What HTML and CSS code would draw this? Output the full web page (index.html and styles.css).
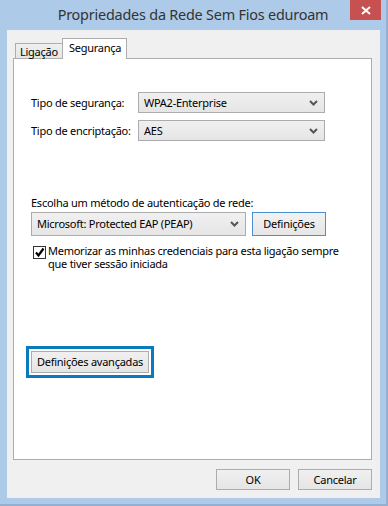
FILE: index.html
```html
<!DOCTYPE html>
<html lang="pt">
<head>
    <meta charset="UTF-8">
    <title>Propriedades da Rede Sem Fios eduroam</title>
    <link rel="stylesheet" href="styles.css">
</head>
<body>
    <div class="window">
        <div class="titlebar">
            <div class="title">Propriedades da Rede Sem Fios eduroam</div>
            <div class="close">
                <svg width="10" height="9" viewBox="0 0 10 9"><path d="M1 1 L9 8 M9 1 L1 8" stroke="#fff" stroke-width="2"/></svg>
            </div>
        </div>
        <div class="client">
            <div class="tabs">
                <div class="tab">Ligação</div>
                <div class="tab active">Segurança</div>
            </div>
            <div class="panel">
                <div class="row first">
                    <span class="label">Tipo de segurança:</span>
                    <div class="select wide">WPA2-Enterprise<span class="arrow"><svg width="9" height="6" viewBox="0 0 9 6"><path d="M1 1 L4.5 4.5 L8 1" stroke="#555" stroke-width="2" fill="none"/></svg></span></div>
                </div>
                <div class="row">
                    <span class="label">Tipo de encriptação:</span>
                    <div class="select wide">AES<span class="arrow"><svg width="9" height="6" viewBox="0 0 9 6"><path d="M1 1 L4.5 4.5 L8 1" stroke="#555" stroke-width="2" fill="none"/></svg></span></div>
                </div>

                <p class="method-label">Escolha um método de autenticação de rede:</p>
                <div class="method-row">
                    <div class="select method">Microsoft: Protected EAP (PEAP)<span class="arrow"><svg width="9" height="6" viewBox="0 0 9 6"><path d="M1 1 L4.5 4.5 L8 1" stroke="#555" stroke-width="2" fill="none"/></svg></span></div>
                    <div class="btn default">Definições</div>
                </div>
                <div class="check-row">
                    <span class="checkbox"><svg width="11" height="11" viewBox="0 0 11 11"><path d="M2 5.5 L4.5 8.5 L9.5 1.5" stroke="#000" stroke-width="2.2" fill="none"/></svg></span>
                    <span class="check-text">Memorizar as minhas credenciais para esta ligação sempre que tiver sessão iniciada</span>
                </div>

                <div class="focus-ring">
                    <div class="btn advanced">Definições avançadas</div>
                </div>
            </div>
            <div class="footer">
                <div class="btn footer-btn">OK</div>
                <div class="btn footer-btn">Cancelar</div>
            </div>
        </div>
    </div>
</body>
</html>
```

FILE: styles.css
```css
body {
    margin: 0;
    font-family: 'Noto Sans', sans-serif;
    font-size: 11px;
    letter-spacing: -0.25px;
    color: #000;
    background: #adcae9;
}
.window {
    width: 388px;
    height: 506px;
    box-sizing: border-box;
    background: #adcae9;
    border-right: 2px solid #94afcf;
    border-bottom: 2px solid #94afcf;
}
.titlebar {
    display: flex;
    align-items: flex-start;
    height: 30px;
    padding-left: 36px;
}
.title {
    flex: 1;
    text-align: center;
    font-size: 14.4px;
    letter-spacing: -0.2px;
    color: #333;
    line-height: 30px;
    white-space: nowrap;
}
.close {
    width: 31px;
    height: 20px;
    margin-right: 5px;
    background: #c75050;
    display: flex;
    align-items: center;
    justify-content: center;
}
.client {
    margin-left: 7px;
    width: 373px;
    height: 468px;
    box-sizing: border-box;
    background: #f0f0f0;
    padding: 8px 8px 0 6px;
}
.tabs {
    display: flex;
    align-items: flex-end;
    height: 20px;
    padding-left: 2px;
}
.tab {
    height: 15px;
    box-sizing: border-box;
    border: 1px solid #adadad;
    border-bottom: none;
    background: linear-gradient(#f0f0f0, #e5e5e5);
    padding: 0 4px 0 4px;
    line-height: 16px;
    color: #000;
    white-space: nowrap;
}
.tab.active {
    height: 21px;
    margin-bottom: -1px;
    background: #fff;
    margin-left: -1px;
    padding: 0 5px 0 6px;
    line-height: 18px;
    position: relative;
    z-index: 1;
}
.panel {
    height: 402px;
    box-sizing: border-box;
    border: 1px solid #adadad;
    background: #fff;
    padding: 33px 0 0 17px;
}
.row {
    display: flex;
    align-items: center;
    height: 21px;
    margin-bottom: 7px;
}
.label {
    width: 107px;
    white-space: nowrap;
}
.select {
    position: relative;
    box-sizing: border-box;
    border: 1px solid #acacac;
    background: linear-gradient(#f0f0f0, #e5e5e5);
    padding-left: 5px;
    white-space: nowrap;
}
.select.wide {
    width: 187px;
    height: 21px;
    line-height: 19px;
}
.arrow {
    position: absolute;
    right: 6px;
    top: 0;
    bottom: 0;
    display: flex;
    align-items: center;
}
.method-label {
    margin: 54px 0 0;
    line-height: 16px;
}
.method-row {
    display: flex;
    gap: 6px;
    margin-top: 1px;
}
.select.method {
    width: 215px;
    height: 24px;
    line-height: 22px;
}
.btn {
    box-sizing: border-box;
    border: 1px solid #acacac;
    background: linear-gradient(#f0f0f0, #e5e5e5);
    text-align: center;
    white-space: nowrap;
}
.btn.default {
    width: 74px;
    height: 24px;
    line-height: 22px;
    border-color: #4a90d0;
    background: linear-gradient(#f2f2f2, #e6e6e6);
}
.check-row {
    display: flex;
    margin-top: 10px;
    padding-left: 2px;
}
.checkbox {
    width: 13px;
    height: 13px;
    box-sizing: border-box;
    border: 1px solid #333;
    background: #fff;
    display: flex;
    align-items: center;
    justify-content: center;
    flex-shrink: 0;
    margin-right: 2px;
}
.check-text {
    width: 305px;
    line-height: 13px;
    margin-top: -2px;
}
.focus-ring {
    display: inline-block;
    margin: 76px 0 0 -5px;
    border: 3px solid #0b79c2;
    padding: 2px;
    background: #fff;
}
.btn.advanced {
    width: 118px;
    height: 22px;
    line-height: 20px;
}
.footer {
    display: flex;
    justify-content: flex-end;
    gap: 8px;
    margin-top: 9px;
}
.footer-btn {
    width: 74px;
    height: 21px;
    line-height: 19px;
}
```
